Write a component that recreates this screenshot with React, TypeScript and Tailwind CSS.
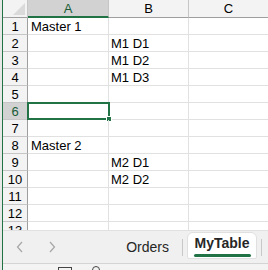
import React from 'react';

const rows: { n: number; a?: string; b?: string }[] = [
  { n: 1, a: 'Master 1' },
  { n: 2, b: 'M1 D1' },
  { n: 3, b: 'M1 D2' },
  { n: 4, b: 'M1 D3' },
  { n: 5 },
  { n: 6 },
  { n: 7 },
  { n: 8, a: 'Master 2' },
  { n: 9, b: 'M2 D1' },
  { n: 10, b: 'M2 D2' },
  { n: 11 },
  { n: 12 },
  { n: 13 },
];

export default function App() {
  return (
    <div className="w-[268px] h-[270px] overflow-hidden flex bg-white text-[13px] text-black" style={{ fontFamily: '"Liberation Sans", Arial, sans-serif' }}>
      <div className="w-[2px] bg-[#e8e8e8]" />
      <div className="w-px bg-[#217346]" />
      <div className="flex-1 flex flex-col min-w-0">
        {/* grid */}
        <div className="h-[230px] overflow-hidden flex flex-col">
          <div className="flex h-[18px] shrink-0 bg-[#f3f3f3]">
            <div className="relative w-[25px] border-r border-[#c6c6c6] border-b border-b-[#9e9e9e]">
              <div className="absolute right-[2px] bottom-[2px] w-0 h-0 border-l-[12px] border-l-transparent border-b-[12px] border-b-[#dadada]" />
            </div>
            <div className="w-[81px] flex items-center justify-center bg-[#d2d2d2] text-[#185c37] border-r border-[#c6c6c6] border-b-2 border-b-[#217346] leading-none pt-[1px]">A</div>
            <div className="w-[80px] flex items-center justify-center border-r border-[#c6c6c6] border-b border-b-[#9e9e9e] leading-none">B</div>
            <div className="flex-1 flex items-center justify-center border-b border-b-[#9e9e9e] leading-none">C</div>
          </div>
          {rows.map(r => (
            <div key={r.n} className="flex h-[17px] shrink-0">
              <div className={`w-[25px] flex items-center justify-center border-r border-b leading-none ${r.n === 6 ? 'bg-[#d2d2d2] text-[#185c37] border-r-[#217346] border-b-[#c6c6c6]' : 'bg-[#f3f3f3] border-r-[#9e9e9e] border-b-[#c6c6c6]'}`}>{r.n}</div>
              <div className="relative w-[81px] border-r border-b border-[#e1e1e1] flex items-center pl-[3px] leading-none whitespace-nowrap">
                {r.a}
                {r.n === 6 && (
                  <div className="absolute -left-px -top-px w-[83px] h-[18px] border-2 border-[#217346]">
                    <div className="absolute -right-[4px] -bottom-[4px] w-[6px] h-[6px] bg-[#217346] border border-white" />
                  </div>
                )}
              </div>
              <div className="w-[80px] border-r border-b border-[#e1e1e1] flex items-center pl-[2px] leading-none whitespace-nowrap">{r.b}</div>
              <div className="flex-1 border-b border-[#e1e1e1]" />
            </div>
          ))}
        </div>
        {/* tab bar */}
        <div className="h-[33px] bg-[#f0f0f0] border-t border-[#e1e1e1] flex items-stretch relative">
          <div className="w-[64px] flex items-center justify-center gap-[24px] text-[#a6a6a6] text-[16px] pl-[2px]">
            <svg width="8" height="12" viewBox="0 0 8 12"><path d="M6 1 L1.5 6 L6 11" fill="none" stroke="#a6a6a6" strokeWidth="1.2" /></svg>
            <svg width="8" height="12" viewBox="0 0 8 12"><path d="M2 1 L6.5 6 L2 11" fill="none" stroke="#a6a6a6" strokeWidth="1.2" /></svg>
          </div>
          <div className="w-[115px] flex items-center justify-end pr-[13px] text-[14px] text-[#262626] pt-[1px]">Orders</div>
          <div className="w-px h-[17px] bg-[#c8c8c8] self-center" />
          <div className="w-[70px] ml-[4px] mt-[1px] mb-[4px] bg-white rounded-t-[6px] rounded-b-[2px] border border-[#e0e0e0] flex flex-col items-center justify-center">
            <span className="text-[14px] font-bold text-[#262626] leading-none mt-[2px]">MyTable</span>
            <div className="w-[57px] h-[3px] rounded-full bg-[#217346] mt-[4px]" />
          </div>
          <div className="w-px h-[17px] bg-[#c8c8c8] self-center ml-[4px]" />
        </div>
        {/* status bar */}
        <div className="flex-1 bg-[#f3f3f3] border-t border-[#d4d4d4] relative">
          <div className="absolute left-[55px] top-[3px] w-[14px] h-[8px] border border-[#444] " />
          <div className="absolute left-[89px] top-[2px] w-[8px] h-[8px] rounded-full border border-[#444]" />
        </div>
      </div>
    </div>
  );
}
